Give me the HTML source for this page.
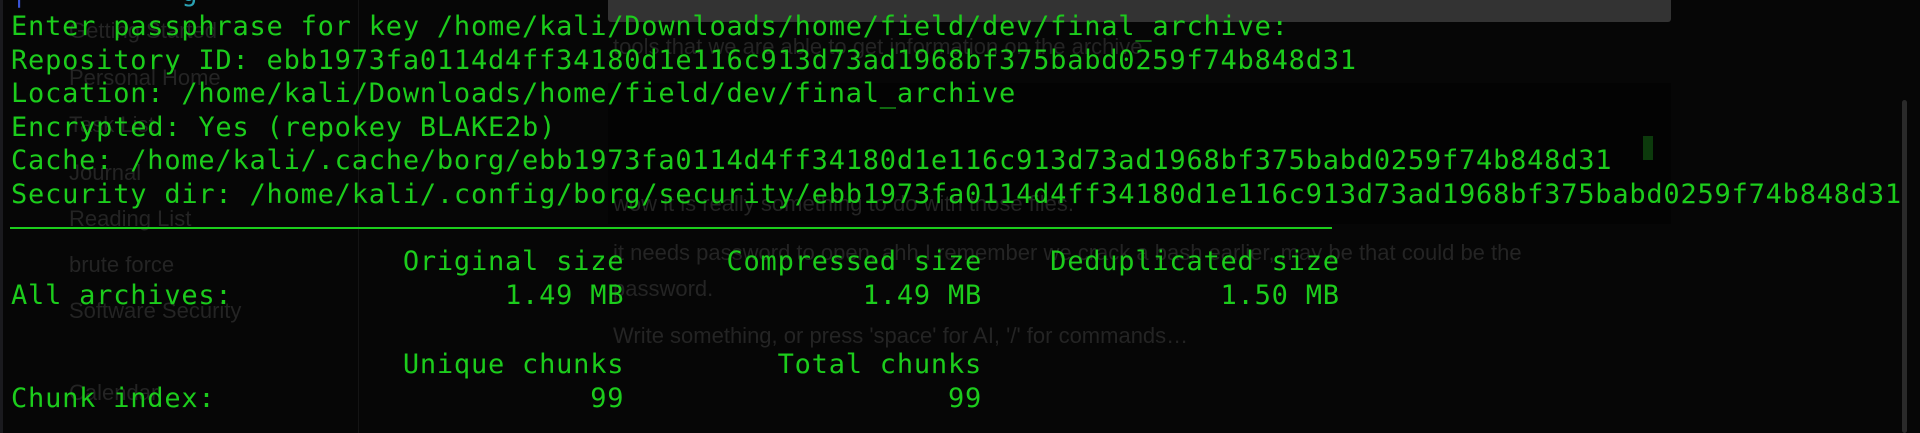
<!DOCTYPE html>
<html><head><meta charset="utf-8"><style>
html,body{margin:0;padding:0;}
body{width:1920px;height:433px;background:#060606;position:relative;overflow:hidden;}
.t{position:absolute;left:11px;margin:0;font-family:"DejaVu Sans Mono","Liberation Mono",monospace;font-size:27px;letter-spacing:0.78px;line-height:33.5px;color:#1ccc1c;white-space:pre;}
.g{position:absolute;font-family:"Liberation Sans",sans-serif;color:#242424;font-size:22px;white-space:pre;}
</style></head><body>
<div style="position:absolute;left:608px;top:0;width:1063px;height:22px;background:#333;border-radius:0 0 3px 3px"></div>
<div style="position:absolute;left:608px;top:83px;width:1063px;height:141px;background:#030303"></div>
<div style="position:absolute;left:358px;top:0;width:1px;height:433px;background:#141414"></div>
<div style="position:absolute;left:0;top:0;width:3px;height:433px;background:#1a1a1e"></div>
<div style="position:absolute;left:1902px;top:100px;width:5px;height:333px;background:#2a2a2a;border-radius:3px"></div>
<div class="g" style="left:69px;top:18px">Getting Started</div>
<div class="g" style="left:69px;top:65px">Personal Home</div>
<div class="g" style="left:69px;top:112px">Task List</div>
<div class="g" style="left:69px;top:160px">Journal</div>
<div class="g" style="left:69px;top:206px">Reading List</div>
<div class="g" style="left:69px;top:252px">brute force</div>
<div class="g" style="left:69px;top:298px">Software Security</div>
<div class="g" style="left:69px;top:380px">Calendar</div>
<div class="g" style="left:613px;top:34px">tools that we are able to get information on the archive</div>
<div class="g" style="left:613px;top:191px">wow it is really something to do with those files.</div>
<div class="g" style="left:613px;top:240px">it needs password to open, ahh I remember we crack a bash earlier, may be that could be the</div>
<div class="g" style="left:613px;top:276px">password.</div>
<div class="g" style="left:613px;top:323px">Write something, or press 'space' for AI, '/' for commands…</div>
<pre class="t" style="top:-24px"><span style="color:#3b55d9">┌</span>         <span style="color:#2aa1b3">g</span></pre>
<pre class="t" style="top:10px">Enter passphrase for key /home/kali/Downloads/home/field/dev/final_archive:
Repository ID: ebb1973fa0114d4ff34180d1e116c913d73ad1968bf375babd0259f74b848d31
Location: /home/kali/Downloads/home/field/dev/final_archive
Encrypted: Yes (repokey BLAKE2b)
Cache: /home/kali/.cache/borg/ebb1973fa0114d4ff34180d1e116c913d73ad1968bf375babd0259f74b848d31
Security dir: /home/kali/.config/borg/security/ebb1973fa0114d4ff34180d1e116c913d73ad1968bf375babd0259f74b848d31</pre>
<pre class="t" style="top:245px;line-height:34.3px">                       Original size      Compressed size    Deduplicated size
All archives:                1.49 MB              1.49 MB              1.50 MB

                       Unique chunks         Total chunks
Chunk index:                      99                   99</pre>
<div style="position:absolute;left:10px;top:227px;width:1322px;height:2px;background:#1ccc1c"></div>
<div style="position:absolute;left:1643px;top:136px;width:10px;height:24px;background:#0c3a0c"></div>
</body></html>
